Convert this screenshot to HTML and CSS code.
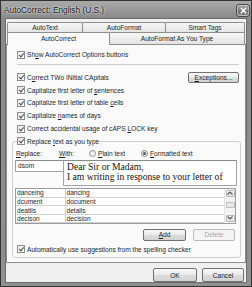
FILE: index.html
```html
<!DOCTYPE html>
<html>
	<head>
		<meta charset="UTF-8">
		<title>AutoCorrect: English (U.S.)</title>
		<link rel="stylesheet" href="styles.css">
	</head>
	<body>
		<div class="window">
			<div class="titlebar">
				<span class="title">AutoCorrect: English (U.S.)</span>
				<span class="close">
					<svg width="7" height="7" viewBox="0 0 7 7"><path d="M0.8 0.8 L6.2 6.2 M6.2 0.8 L0.8 6.2" stroke="#fff" stroke-width="1.5"/></svg>
				</span>
			</div>
			<div class="client">
				<!-- tabs -->
				<div class="tabrow">
					<div class="tab w-autotext">AutoText</div>
					<div class="tab w-autoformat">AutoFormat</div>
					<div class="tab w-smarttags">Smart Tags</div>
				</div>
				<div class="tabrow front">
					<div class="tab w-autocorrect selected">AutoCorrect</div>
					<div class="tab w-asyoutype">AutoFormat As You Type</div>
				</div>
				<div class="panel">
					<div class="row first">
						<span class="check"></span><span>Sh<u>o</u>w AutoCorrect Options buttons</span>
					</div>
					<div class="sep"></div>
					<div class="row">
						<span class="check"></span><span>C<u>o</u>rrect TWo INitial CApitals</span>
						<span class="btn exceptions"><u>E</u>xceptions...</span>
					</div>
					<div class="row">
						<span class="check"></span><span>Capitalize first letter of <u>s</u>entences</span>
					</div>
					<div class="row">
						<span class="check"></span><span>Capitalize first letter of table <u>c</u>ells</span>
					</div>
					<div class="row">
						<span class="check"></span><span>Capitalize <u>n</u>ames of days</span>
					</div>
					<div class="row">
						<span class="check"></span><span>Correct accidental usage of cAPS <u>L</u>OCK key</span>
					</div>
					<fieldset class="group">
						<legend class="row">
							<span class="check"></span><span>Replace <u>t</u>ext as you type</span>
						</legend>
						<div class="labels">
							<span class="lbl-replace"><u>R</u>eplace:</span>
							<span class="lbl-with"><u>W</u>ith:</span>
							<span class="opt"><span class="radio"></span><u>P</u>lain text</span>
							<span class="opt"><span class="radio on"></span><u>F</u>ormatted text</span>
						</div>
						<div class="inputs">
							<div class="field replace-field">dsom</div>
							<div class="field with-field">Dear Sir or Madam,<br>I am writing in response to your letter of</div>
						</div>
						<div class="list">
							<table>
								<tr><td class="c1">danceing</td><td>dancing</td></tr>
								<tr><td class="c1">dcument</td><td>document</td></tr>
								<tr><td class="c1">deatils</td><td>details</td></tr>
								<tr><td class="c1">decison</td><td>decision</td></tr>
							</table>
							<div class="scrollbar">
								<span class="sb-btn">
									<svg width="6" height="4" viewBox="0 0 6 4"><path d="M0.5 3.5 L3 1 L5.5 3.5" fill="none" stroke="#555" stroke-width="1.2"/></svg>
								</span>
								<span class="sb-thumb"></span>
								<span class="sb-fill"></span>
								<span class="sb-btn">
									<svg width="6" height="4" viewBox="0 0 6 4"><path d="M0.5 0.5 L3 3 L5.5 0.5" fill="none" stroke="#555" stroke-width="1.2"/></svg>
								</span>
							</div>
						</div>
						<div class="listbtns">
							<span class="btn add"><u>A</u>dd</span>
							<span class="btn delete disabled">Delete</span>
						</div>
						<div class="row auto">
							<span class="check"></span><span>Automatically use suggestions from the spelling checker</span>
						</div>
					</fieldset>
				</div>
				<div class="footer">
					<span class="btn ok">OK</span>
					<span class="btn cancel">Cancel</span>
				</div>
			</div>
		</div>
	</body>
</html>
```

FILE: styles.css
```css
* {
	margin: 0;
	padding: 0;
	box-sizing: border-box;
}

body {
	background: #fff;
	font: 6.6px "Liberation Sans", Arial, sans-serif;
	color: #1e1e1e;
}

u {
	text-decoration: underline;
}

/* window frame */
.window {
	width: 252px;
	height: 287px;
	border: 1px solid #333;
	background: linear-gradient(#a9a9a9, #8a8a8a 17px, #909090);
	display: flex;
	flex-direction: column;
}

.titlebar {
	height: 17px;
	display: flex;
	align-items: flex-start;
	padding: 0 1px 0 3px;
}

.title {
	margin-top: 4px;
	font-size: 8.3px;
	line-height: 10px;
	color: #151515;
	text-shadow: 0 0 3px #eee, 0 0 2px #eee;
}

.close {
	margin: 3px 0 0 auto;
	width: 14px;
	height: 13px;
	border: 1px solid #4a4a4a;
	border-radius: 3px;
	background: linear-gradient(#a4a4a4, #7c7c7c 50%, #6a6a6a 51%, #8a8a8a);
	box-shadow: inset 0 0 0 1px rgba(255, 255, 255, 0.45);
	display: flex;
	align-items: center;
	justify-content: center;
}

.client {
	flex: 1;
	margin: 0 4px 3px 4px;
	background: #efefef;
	border: 1px solid #6c6c6c;
	padding: 3px 0 0 0;
	display: flex;
	flex-direction: column;
}

/* tabs */
.tabrow {
	display: flex;
	padding-left: 1px;
	height: 11px;
}

.tabrow.front {
	margin-top: -1px;
	height: 12px;
}

.tab {
	height: 100%;
	border: 1px solid #8e8e8e;
	border-bottom: 0;
	border-radius: 2px 2px 0 0;
	background: linear-gradient(#f7f7f7, #e3e3e3);
	text-align: center;
	line-height: 10px;
	margin-left: -1px;
}

.tab:first-child {
	margin-left: 0;
}

.front .tab {
	line-height: 11px;
}

.tab.selected {
	position: relative;
	z-index: 1;
	height: 13px;
	background: #fafafa;
}

.w-autotext { width: 76px; }
.w-autoformat { width: 84px; }
.w-smarttags { width: 80px; }
.w-autocorrect { width: 103px; }
.w-asyoutype { width: 136px; }

/* panel */
.panel {
	height: 219px;
	border: 1px solid #8e8e8e;
	background: #fafafa;
	padding-top: 3px;
}

.row {
	display: flex;
	align-items: center;
	height: 12.8px;
	padding-left: 10px;
	white-space: nowrap;
}

.row.first {
	height: 13px;
}

.check {
	width: 8px;
	height: 8px;
	margin-right: 2px;
	border: 1px solid #8c8c8c;
	background: linear-gradient(135deg, #e6e6e6, #fff);
	position: relative;
	flex: none;
}

.check::after {
	content: "";
	position: absolute;
	left: 1.5px;
	top: 0;
	width: 2px;
	height: 4px;
	border: solid #474747;
	border-width: 0 1.2px 1.2px 0;
	transform: rotate(40deg);
}

.sep {
	height: 1px;
	background: #cdcdcd;
	margin: 3px 6px 6px 10px;
}

.btn {
	display: flex;
	align-items: center;
	justify-content: center;
	border: 1px solid #707070;
	border-radius: 2px;
	background: linear-gradient(#f8f8f8, #e9e9e9 50%, #dcdcdc 51%, #d3d3d3);
	color: #1e1e1e;
}

.btn.disabled {
	border-color: #b9b9b9;
	background: #f4f4f4;
	color: #a6a6a6;
}

.exceptions {
	margin: 1px 6px 0 auto;
	width: 51px;
	height: 11px;
}

/* replace group */
.group {
	margin: 0 4px 0 5px;
	border: 1px solid #cfcfcf;
	border-radius: 3px;
	padding: 0 3px 1px 3px;
}

.group legend.row {
	padding: 0 1px 0 0;
	margin-left: 1px;
}

.labels {
	display: flex;
	align-items: center;
	height: 11px;
	margin-top: 0.6px;
	white-space: nowrap;
}

.lbl-replace { width: 43px; }
.lbl-with { width: 30px; }

.opt {
	display: flex;
	align-items: center;
	width: 52px;
}

.radio {
	width: 7px;
	height: 7px;
	border: 1px solid #8a8a8a;
	border-radius: 50%;
	background: linear-gradient(135deg, #e4e4e4, #fff);
	margin-right: 2px;
	display: flex;
	align-items: center;
	justify-content: center;
}

.radio.on::after {
	content: "";
	width: 3px;
	height: 3px;
	border-radius: 50%;
	background: #4f4f4f;
}

.inputs {
	display: flex;
	align-items: flex-start;
	margin-top: 0.6px;
}

.field {
	background: #fff;
	border: 1px solid #a3a3a3;
	border-top-color: #8a8a8a;
}

.replace-field {
	width: 49px;
	height: 12px;
	margin-left: -1px;
	padding: 1px 0 0 2px;
	line-height: 8px;
}

.with-field {
	width: 174px;
	height: 26px;
	margin-left: -1px;
	padding: 1px 0 0 3px;
	font: 9.6px/10px "Liberation Serif", "Times New Roman", serif;
	color: #111;
	white-space: nowrap;
	overflow: hidden;
}

.list {
	display: flex;
	margin: 2px 1px 0 -1px;
	height: 36px;
	border: 1px solid #9c9c9c;
	background: #fff;
}

.list table {
	flex: 1;
	border-collapse: collapse;
	align-self: flex-start;
}

.list td {
	height: 8.5px;
	line-height: 7px;
	padding: 0 0 0 1px;
	border-bottom: 1px solid #cfcfcf;
	white-space: nowrap;
}

.list td.c1 {
	width: 49px;
	border-right: 1px solid #cfcfcf;
}

.scrollbar {
	width: 11px;
	display: flex;
	flex-direction: column;
	align-items: center;
	padding: 1px 1px;
	background: #f3f3f3;
	border-left: 1px solid #e2e2e2;
}

.sb-btn {
	width: 9px;
	height: 7px;
	border: 1px solid #b8b8b8;
	border-radius: 1px;
	background: linear-gradient(#fafafa, #e3e3e3);
	display: flex;
	align-items: center;
	justify-content: center;
}

.sb-thumb {
	width: 9px;
	height: 6px;
	margin-top: 5px;
	border: 1px solid #c2c2c2;
	background: #e8e8e8;
}

.sb-fill {
	flex: 1;
}

.listbtns {
	display: flex;
	justify-content: flex-end;
	gap: 7px;
	margin: 5px 2px 0 0;
}

.add {
	width: 43px;
	height: 12px;
}

.delete {
	width: 42px;
	height: 12px;
}

.row.auto {
	margin-top: 2px;
	padding-left: 1px;
}

/* footer buttons */
.footer {
	display: flex;
	justify-content: flex-end;
	gap: 5px;
	padding: 5px 2px 0 0;
}

.ok {
	width: 44px;
	height: 14px;
}

.cancel {
	width: 42px;
	height: 14px;
}
```
